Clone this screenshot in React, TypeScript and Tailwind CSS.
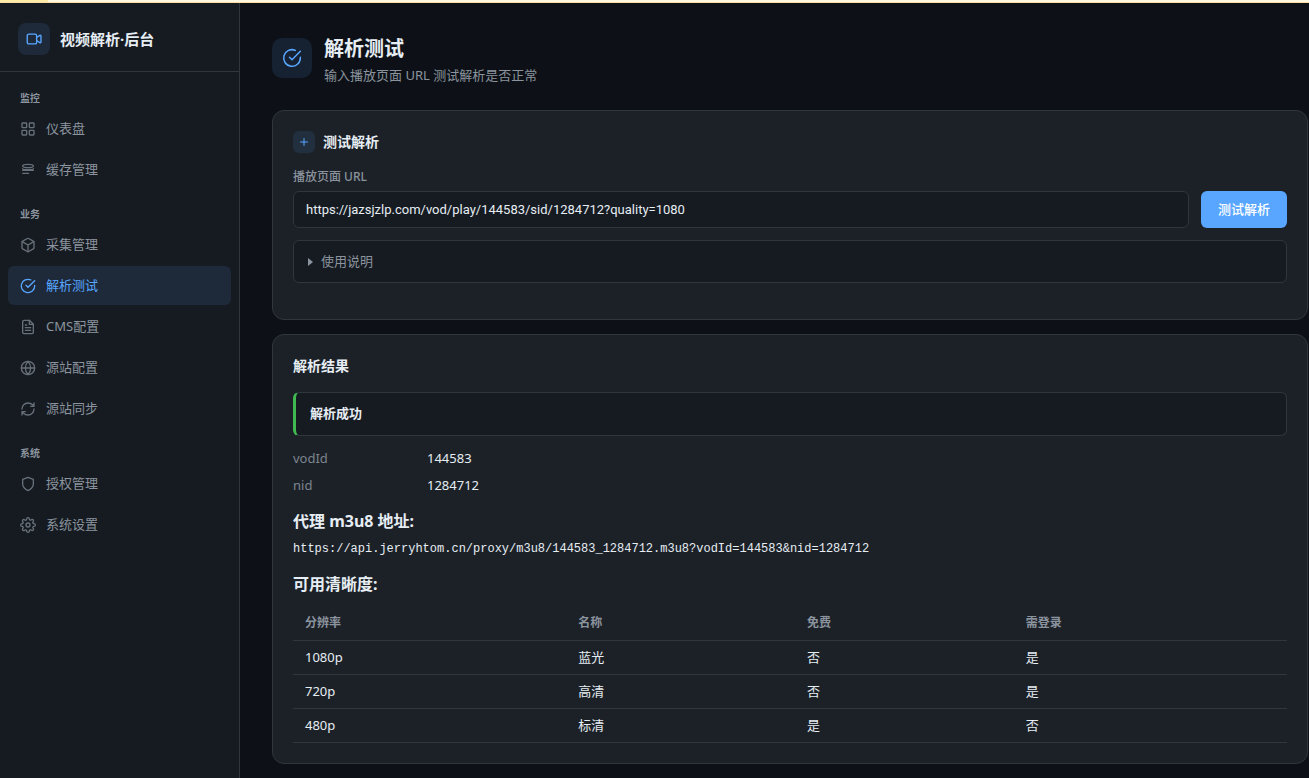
import React, { useState } from 'react';

type IconProps = { className?: string };

const base = {
  viewBox: '0 0 24 24',
  fill: 'none',
  stroke: 'currentColor',
  strokeWidth: 1.8,
  strokeLinecap: 'round' as const,
  strokeLinejoin: 'round' as const,
};

const VideoIcon = ({ className }: IconProps) => (
  <svg {...base} className={className}>
    <path d="M15.500 10l4.300-2.800a1 1 0 0 1 1.500.9v7.800a1 1 0 0 1-1.500.9L15.500 14" />
    <rect x="3" y="5.500" width="12.500" height="13" rx="2" />
  </svg>
);

const GridIcon = ({ className }: IconProps) => (
  <svg {...base} className={className}>
    <rect x="3" y="3" width="7" height="7" rx="1" />
    <rect x="14" y="3" width="7" height="7" rx="1" />
    <rect x="3" y="14" width="7" height="7" rx="1" />
    <rect x="14" y="14" width="7" height="7" rx="1" />
  </svg>
);

const CacheIcon = ({ className }: IconProps) => (
  <svg {...base} className={className}>
    <ellipse cx="12" cy="6" rx="8" ry="2.500" />
    <path d="M4 10c0 2.200 16 2.200 16 0M4 12.500h16M4 17h9" />
  </svg>
);

const BoxIcon = ({ className }: IconProps) => (
  <svg {...base} className={className}>
    <path d="M21 16V8a2 2 0 0 0-1-1.730l-7-4a2 2 0 0 0-2 0l-7 4A2 2 0 0 0 3 8v8a2 2 0 0 0 1 1.730l7 4a2 2 0 0 0 2 0l7-4A2 2 0 0 0 21 16z" />
    <path d="M3.270 6.960L12 12.010l8.730-5.050M12 22.080V12" />
  </svg>
);

const CheckCircleIcon = ({ className }: IconProps) => (
  <svg {...base} className={className}>
    <path d="M22 11.080V12a10 10 0 1 1-5.930-9.140" />
    <path d="M22 4L12 14.010l-3-3" />
  </svg>
);

const FileIcon = ({ className }: IconProps) => (
  <svg {...base} className={className}>
    <path d="M14 2H6a2 2 0 0 0-2 2v16a2 2 0 0 0 2 2h12a2 2 0 0 0 2-2V8z" />
    <path d="M14 2v6h6M16 13H8M16 17H8M10 9H8" />
  </svg>
);

const GlobeIcon = ({ className }: IconProps) => (
  <svg {...base} className={className}>
    <circle cx="12" cy="12" r="10" />
    <path d="M2 12h20M12 2a15.300 15.300 0 0 1 4 10 15.300 15.300 0 0 1-4 10 15.300 15.300 0 0 1-4-10 15.300 15.300 0 0 1 4-10z" />
  </svg>
);

const SyncIcon = ({ className }: IconProps) => (
  <svg {...base} className={className}>
    <path d="M3 12a9 9 0 0 1 9-9 9.750 9.750 0 0 1 6.740 2.740L21 8M21 3v5h-5" />
    <path d="M21 12a9 9 0 0 1-9 9 9.750 9.750 0 0 1-6.740-2.740L3 16M8 16H3v5" />
  </svg>
);

const ShieldIcon = ({ className }: IconProps) => (
  <svg {...base} className={className}>
    <path d="M12 22s8-4 8-10V5l-8-3-8 3v7c0 6 8 10 8 10z" />
  </svg>
);

const GearIcon = ({ className }: IconProps) => (
  <svg {...base} className={className}>
    <circle cx="12" cy="12" r="3" />
    <path d="M19.400 15a1.650 1.650 0 0 0 .33 1.820l.06.06a2 2 0 0 1 0 2.830 2 2 0 0 1-2.830 0l-.06-.06a1.650 1.650 0 0 0-1.820-.33 1.650 1.650 0 0 0-1 1.510V21a2 2 0 0 1-2 2 2 2 0 0 1-2-2v-.09A1.650 1.650 0 0 0 9 19.400a1.650 1.650 0 0 0-1.820.33l-.06.06a2 2 0 0 1-2.830 0 2 2 0 0 1 0-2.830l.06-.06a1.650 1.650 0 0 0 .33-1.820 1.650 1.650 0 0 0-1.510-1H3a2 2 0 0 1-2-2 2 2 0 0 1 2-2h.09A1.650 1.650 0 0 0 4.600 9a1.650 1.650 0 0 0-.33-1.820l-.06-.06a2 2 0 0 1 0-2.830 2 2 0 0 1 2.830 0l.06.06a1.650 1.650 0 0 0 1.820.33H9a1.650 1.650 0 0 0 1-1.510V3a2 2 0 0 1 2-2 2 2 0 0 1 2 2v.09a1.650 1.650 0 0 0 1 1.510 1.650 1.650 0 0 0 1.820-.33l.06-.06a2 2 0 0 1 2.830 0 2 2 0 0 1 0 2.830l-.06.06a1.650 1.650 0 0 0-.33 1.820V9a1.650 1.650 0 0 0 1.510 1H21a2 2 0 0 1 2 2 2 2 0 0 1-2 2h-.09a1.650 1.650 0 0 0-1.510 1z" />
  </svg>
);

const navGroups = [
  {
    title: '监控',
    items: [
      { label: '仪表盘', icon: GridIcon },
      { label: '缓存管理', icon: CacheIcon },
    ],
  },
  {
    title: '业务',
    items: [
      { label: '采集管理', icon: BoxIcon },
      { label: '解析测试', icon: CheckCircleIcon },
      { label: 'CMS配置', icon: FileIcon },
      { label: '源站配置', icon: GlobeIcon },
      { label: '源站同步', icon: SyncIcon },
    ],
  },
  {
    title: '系统',
    items: [
      { label: '授权管理', icon: ShieldIcon },
      { label: '系统设置', icon: GearIcon },
    ],
  },
];

const qualities = [
  { resolution: '1080p', name: '蓝光', free: '否', login: '是' },
  { resolution: '720p', name: '高清', free: '否', login: '是' },
  { resolution: '480p', name: '标清', free: '是', login: '否' },
];

function Sidebar() {
  const [active, setActive] = useState('解析测试');

  return (
    <aside className="w-60 shrink-0 bg-[#161b22] border-r border-[#30363d]">
      <div className="flex items-center gap-2.5 h-[69px] px-[18px] pt-1 border-b border-[#30363d]">
        <div className="w-8 h-8 rounded-lg bg-[#1e2a3a] text-[#58a6ff] flex items-center justify-center">
          <VideoIcon className="w-[18px] h-[18px]" />
        </div>
        <span className="text-[15px] font-bold text-[#e6edf3]">视频解析·后台</span>
      </div>

      <nav className="px-2 pt-4">
        {navGroups.map((group) => (
          <div key={group.title} className="mb-[15px]">
            <h2 className="px-3 pt-[3px] pb-1 text-[10px] leading-[14px] font-semibold text-[#8b949e]">{group.title}</h2>
            <ul className="flex flex-col gap-0.5">
              {group.items.map(({ label, icon: Icon }) => (
                <li key={label}>
                  <a
                    href="#"
                    onClick={() => setActive(label)}
                    className={`flex items-center gap-2.5 h-[39px] px-3 rounded-md text-[13px] ${
                      active === label ? 'bg-[#1e2a3a] text-[#58a6ff]' : 'text-[#8b949e]'
                    }`}
                  >
                    <Icon className={active === label ? 'w-4 h-4 stroke-2' : 'w-4 h-4 stroke-2 opacity-70'} />
                    <span>{label}</span>
                  </a>
                </li>
              ))}
            </ul>
          </div>
        ))}
      </nav>
    </aside>
  );
}

function TestCard() {
  const [url, setUrl] = useState('https://jazsjzlp.com/vod/play/144583/sid/1284712?quality=1080');

  return (
    <section className="rounded-xl border border-[#30363d] bg-[#1c2128] p-5 pb-9">
      <div className="flex items-center gap-2 mb-3.5">
        <div className="w-[22px] h-[22px] rounded-md bg-[#222f3f] text-[#58a6ff] flex items-center justify-center">
          <svg {...base} className="w-3 h-3 stroke-2">
            <path d="M12 5v14M5 12h14" />
          </svg>
        </div>
        <h2 className="text-sm leading-5 font-semibold text-[#e6edf3]">测试解析</h2>
      </div>

      <form className="flex items-end gap-3" onSubmit={(e) => e.preventDefault()}>
        <div className="flex-1 min-w-0">
          <label htmlFor="url" className="block mb-1 text-xs leading-5 font-medium text-[#8b949e]">
            播放页面 URL
          </label>
          <input
            id="url"
            type="text"
            value={url}
            onChange={(e) => setUrl(e.target.value)}
            className="block w-full h-[37px] px-3 rounded-md border border-[#30363d] bg-[#161b22] text-[13px] font-['Roboto','Noto_Sans_CJK_SC',sans-serif] text-[#e6edf3] outline-none"
          />
        </div>
        <button type="submit" className="h-[37px] px-[17px] rounded-md bg-[#58a6ff] text-[13px] font-medium text-white">
          测试解析
        </button>
      </form>

      <details className="mt-3 rounded-md border border-[#30363d] bg-[#161b22] text-[13px] text-[#8b949e] group">
        <summary className="flex items-center gap-2 h-[41px] px-3.5 list-none cursor-pointer">
          <svg viewBox="0 0 5 8" fill="currentColor" className="w-[5px] h-2 group-open:rotate-90">
            <path d="M0 0l5 4-5 4z" />
          </svg>
          使用说明
        </summary>
        <p className="px-3.5 pb-3">输入播放页面 URL</p>
      </details>
    </section>
  );
}

function ResultCard() {
  return (
    <section className="rounded-xl border border-[#30363d] bg-[#1c2128] p-5">
      <h2 className="text-sm leading-[22px] mb-[15px] font-semibold text-[#e6edf3]">解析结果</h2>

      <div className="flex items-center h-11 px-3.5 rounded-md border border-l-[3px] border-[#30363d] border-l-[#3fb950] bg-[#161b22] text-[13px] font-bold">
        解析成功
      </div>

      <dl className="mt-3 grid grid-cols-[120px_1fr] gap-x-3.5 gap-y-[7px] text-[13px] leading-5">
        <dt className="text-[#7d858f]">vodId</dt>
        <dd>144583</dd>
        <dt className="text-[#7d858f]">nid</dt>
        <dd>1284712</dd>
      </dl>

      <h3 className="mt-3.5 text-base leading-6 font-bold">代理 m3u8 地址:</h3>
      <p className="mt-1.5 text-xs leading-5 break-all font-['Liberation_Mono','Noto_Sans_CJK_SC',monospace]">
        https://api.jerryhtom.cn/proxy/m3u8/144583_1284712.m3u8?vodId=144583&amp;nid=1284712
      </p>

      <h3 className="mt-[13px] text-base leading-6 font-bold">可用清晰度:</h3>
      <table className="mt-2.5 w-full table-fixed text-left text-[13px] leading-[17px]">
        <thead>
          <tr className="border-b border-[#30363d] text-xs leading-[18px] text-[#8b949e]">
            <th className="w-[27.500%] px-3 py-2 font-semibold">分辨率</th>
            <th className="w-[23%] px-3 py-2 font-semibold">名称</th>
            <th className="w-[22%] px-3 py-2 font-semibold">免费</th>
            <th className="px-3 py-2 font-semibold">需登录</th>
          </tr>
        </thead>
        <tbody>
          {qualities.map((q) => (
            <tr key={q.resolution} className="border-b border-[#30363d]">
              <td className="px-3 py-2">{q.resolution}</td>
              <td className="px-3 py-2">{q.name}</td>
              <td className="px-3 py-2">{q.free}</td>
              <td className="px-3 py-2">{q.login}</td>
            </tr>
          ))}
        </tbody>
      </table>
    </section>
  );
}

export default function App() {
  return (
    <div className="min-h-screen flex flex-col bg-[#0d1117] text-[#e6edf3] font-['Noto_Sans','Noto_Sans_CJK_SC',sans-serif]">
      {/* Top strip */}
      <div className="h-[3px] flex border-b border-[#ffdf9f]">
        <div className="w-12 bg-[#ffeba8]" />
        <div className="flex-1 bg-[#fff8e0]" />
      </div>

      <div className="flex flex-1">
        <Sidebar />
        <main className="flex-1 min-w-0 pl-8 pr-px pt-[33px] pb-3.5">
          <header className="flex items-start gap-3 mb-[25px]">
            <div className="w-10 h-10 mt-0.5 rounded-[10px] bg-[#162131] text-[#58a6ff] flex items-center justify-center">
              <CheckCircleIcon className="w-5 h-5" />
            </div>
            <div>
              <h1 className="text-xl leading-[26px] font-bold">解析测试</h1>
              <p className="mt-[3px] text-[13px] leading-5 text-[#8b949e]">输入播放页面 URL 测试解析是否正常</p>
            </div>
          </header>

          <div className="flex flex-col gap-3.5">
            <TestCard />
            <ResultCard />
          </div>
        </main>
      </div>
    </div>
  );
}
